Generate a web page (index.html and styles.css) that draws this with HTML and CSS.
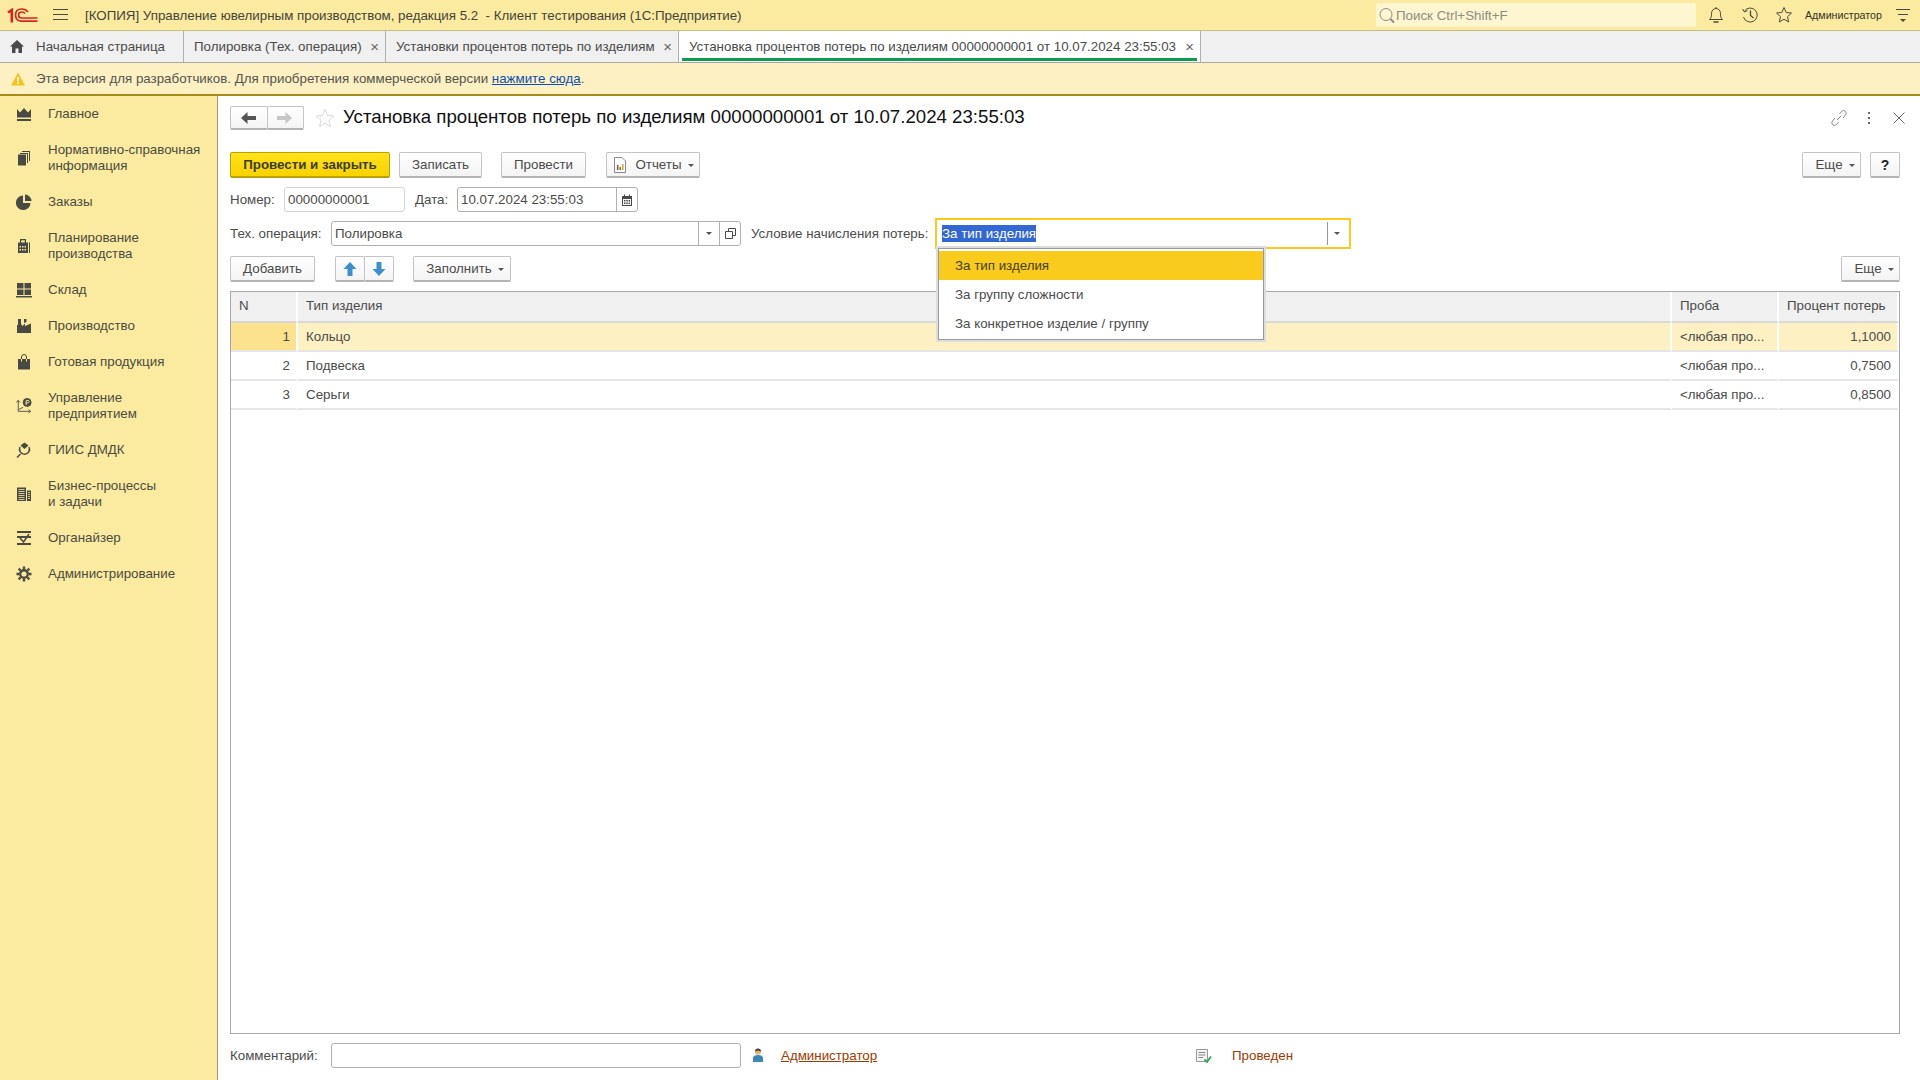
FILE: index.html

```html
<!DOCTYPE html>
<html lang="ru">
<head>
<meta charset="utf-8"/>
<title>Управление ювелирным производством</title>
<link rel="stylesheet" href="styles.css">
</head>
<body>
<div class="app">

  <div class="topbar">
    <svg class="logo" width="31" height="15" viewBox="0 0 31 15" fill="none" stroke="#d9261c">
      <path d="M1 4.500 L4.800 2 V14.500" stroke-width="2.600"/>
      <path d="M21 4 C19.500 1.800 17 1 14.500 1 C10.500 1 8.500 3.500 8.500 7 C8.500 10.500 10.500 13.200 14.500 13.200 H30.500" stroke-width="1.700"/>
      <path d="M18 5.700 C17.500 4.700 16 4 14.500 4 C12.500 4 11.500 5.500 11.500 7 C11.500 8.500 12.500 10 14.500 10 H30.500" stroke-width="1.700"/>
    </svg>
    <svg class="burger" width="16" height="12" viewBox="0 0 16 12" stroke="#4a4a40"><path d="M0 .5H15M0 5.500H15M0 10.500H15"/></svg>
    <div class="app-title">[КОПИЯ] Управление ювелирным производством, редакция 5.2&nbsp; - Клиент тестирования (1С:Предприятие)</div>
    <div class="search">
      <svg width="18" height="18" viewBox="0 0 18 18" fill="none" stroke="#8d8d80"><circle cx="8" cy="8.500" r="6"/><path d="M12.500 13 L16 16.500" stroke-width="2"/></svg>
      <span>Поиск Ctrl+Shift+F</span>
    </div>
    <svg class="top-ic ic-bell" width="16" height="18" viewBox="0 0 16 18" fill="none" stroke="#4a4a40"><path d="M1.500 13.500 C3.500 12 3.500 9.500 3.500 7.500 C3.500 4.500 5.500 2.500 8 2.500 C10.500 2.500 12.500 4.500 12.500 7.500 C12.500 9.500 12.500 12 14.500 13.500 Z"/><path d="M8 1V2.500"/><path d="M5.500 16H10.500" stroke-width="1.500"/></svg>
    <svg class="top-ic ic-hist" width="18" height="18" viewBox="0 0 18 18" fill="none" stroke="#4a4a40"><path d="M3.500 5 A7 7 0 1 1 2.500 11"/><path d="M1.500 3 L3.500 6 L6.500 4.500"/><path d="M9.500 4.500V9.500L12.500 12" stroke-width="1.300"/></svg>
    <svg class="top-ic ic-star" width="18" height="18" viewBox="0 0 18 18" fill="none" stroke="#4a4a40"><path d="M9 1.500 L11.200 6.500 L16.500 7 L12.500 10.700 L13.700 16 L9 13.200 L4.300 16 L5.500 10.700 L1.500 7 L6.800 6.500 Z"/></svg>
    <div class="user">Администратор</div>
    <svg class="top-ic ic-menu" width="16" height="16" viewBox="0 0 16 16" stroke="#4a4a40"><path d="M1 2.500H15M3 7.500H13" fill="none"/><path d="M5 12 H11 L8 15 Z" fill="#4a4a40" stroke="none"/></svg>
  </div>

  <div class="tabs">
    <div class="tab tab-home">
      <svg width="14" height="13" viewBox="0 0 14 13" fill="#4a4a4a"><path d="M7 0 L14 6.500 H12 V13 H8.500 V8.500 H5.500 V13 H2 V6.500 H0 Z"/></svg>
      <span>Начальная страница</span>
    </div>
    <div class="tab tab-2"><span>Полировка (Тех. операция)</span><i class="tab-x">×</i></div>
    <div class="tab tab-3"><span>Установки процентов потерь по изделиям</span><i class="tab-x">×</i></div>
    <div class="tab tab-4 active"><span>Установка процентов потерь по изделиям 00000000001 от 10.07.2024 23:55:03</span><i class="tab-x">×</i></div>
  </div>

  <div class="notice">
    <svg width="14" height="14" viewBox="0 0 14 14"><path d="M7 0.500 L14 13.500 H0 Z" fill="#f6c21c"/><path d="M7 5V9.500M7 10.500V12" stroke="#fff" stroke-width="1.600"/></svg>
    <span>Эта версия для разработчиков. Для приобретения коммерческой версии <a href="#">нажмите сюда</a>.</span>
  </div>

  <div class="workspace">
    <nav class="sidebar">
      <div class="nav-item">
        <svg width="16" height="16" viewBox="0 0 16 16" fill="#4a4a44"><path d="M1 3 L4 6.500 L8 2 L12 6.500 L15 3 V11.500 H1 Z"/><path d="M1 13H15V15H1Z"/></svg>
        <span>Главное</span>
      </div>
      <div class="nav-item">
        <svg width="16" height="16" viewBox="0 0 16 16" fill="#4a4a44"><path d="M2 4.500H10V15.500H2Z"/><path d="M4 3 H12 V13 H11 V4 H4Z"/><path d="M6 1 H14 V11 H13 V2 H6Z"/></svg>
        <span>Нормативно-справочная<br>информация</span>
      </div>
      <div class="nav-item">
        <svg width="16" height="16" viewBox="0 0 16 16" fill="#4a4a44"><path d="M7 1.500 V9 H14.500 A7.300 7.300 0 1 1 7 1.500Z"/><path d="M9 0.500 A7 7 0 0 1 15.500 7 H9Z"/></svg>
        <span>Заказы</span>
      </div>
      <div class="nav-item">
        <svg width="16" height="16" viewBox="0 0 16 16" fill="#4a4a44"><path d="M4 1H10V4.500H12V15H2V4.500H4ZM5.200 2.200V4.500H8.800V2.200Z" fill-rule="evenodd"/><path d="M13 4.500H14V15H13Z"/><path d="M3.500 8H5V9.500H3.500ZM6 8H7.500V9.500H6ZM8.500 8H10V9.500H8.500ZM3.500 11H5V12.500H3.500ZM6 11H7.500V12.500H6ZM8.500 11H10V12.500H8.500Z" fill="#fbeba0"/></svg>
        <span>Планирование<br>производства</span>
      </div>
      <div class="nav-item">
        <svg width="16" height="16" viewBox="0 0 16 16" fill="#4a4a44"><path d="M1 1H7.500V6.500H1ZM8.500 1H15V6.500H8.500ZM1 7.500H7.500V13H1ZM8.500 7.500H15V13H8.500ZM0 14H16V15.500H0Z"/></svg>
        <span>Склад</span>
      </div>
      <div class="nav-item">
        <svg width="16" height="16" viewBox="0 0 16 16" fill="#4a4a44"><path d="M2 1H5V6L6.500 8L9 5.500V8L15 5.500V15H1V7H2Z"/><path d="M8 1H10.500V4L8 5Z"/></svg>
        <span>Производство</span>
      </div>
      <div class="nav-item">
        <svg width="16" height="16" viewBox="0 0 16 16" fill="#4a4a44"><path d="M2 5H14V15.500H2Z"/><path d="M5.500 7.500V3A2.500 2.500 0 0 1 10.500 3V7.500" fill="none" stroke="#4a4a44"/><path d="M5.500 5V7.500M10.500 5V7.500" stroke="#fbeba0"/></svg>
        <span>Готовая продукция</span>
      </div>
      <div class="nav-item">
        <svg width="18" height="18" viewBox="0 0 18 18" fill="none" stroke="#4a4a44"><path d="M2.500 3V15M0.500 5L2.500 2.500L4.500 5M2.500 15H16M14 13L16.500 15L14 17"/><path d="M3 13L8 10.500"/><circle cx="12.500" cy="5" r="4.500" fill="#4a4a44"/><path d="M11.500 8V2.800H13.500A1.300 1.300 0 0 1 13.500 5.400H10.500" stroke="#fbeba0"/></svg>
        <span>Управление<br>предприятием</span>
      </div>
      <div class="nav-item">
        <svg width="16" height="16" viewBox="0 0 16 16" fill="none" stroke="#4a4a44" stroke-width="1.500"><path d="M4.500 3.500 L8.500 0.500 L12.500 3.500 L8.500 7Z" fill="#4a4a44" stroke="none"/><path d="M4 5A5 5 0 1 0 13 5"/><path d="M4.500 12L1 15.500"/></svg>
        <span>ГИИС ДМДК</span>
      </div>
      <div class="nav-item">
        <svg width="16" height="16" viewBox="0 0 16 16" fill="#4a4a44"><path d="M1 1.500H10V15H1ZM11 4.500H15V15H11Z"/><path d="M2.500 3.500H8.500M2.500 5.500H8.500M2.500 7.500H8.500M2.500 9.500H8.500M2.500 11.500H8.500M2.500 13.500H8.500M12 6.500H14M12 8.500H14M12 10.500H14M12 12.500H14" stroke="#fbeba0" stroke-width=".8"/></svg>
        <span>Бизнес-процессы<br>и задачи</span>
      </div>
      <div class="nav-item">
        <svg width="16" height="16" viewBox="0 0 16 16" fill="none" stroke="#4a4a44" stroke-width="2"><path d="M1 2H15M1 14H15M1 7H15"/><path d="M4 8L7.500 12L13 4" stroke-width="1.500"/></svg>
        <span>Органайзер</span>
      </div>
      <div class="nav-item">
        <svg width="16" height="16" viewBox="0 0 16 16" fill="none" stroke="#4a4a44"><circle cx="8" cy="8" r="3.800" stroke-width="2.400"/><path d="M8 .5V3M8 13V15.500M.5 8H3M13 8H15.500M2.700 2.700L4.500 4.500M11.500 11.500L13.300 13.300M2.700 13.300L4.500 11.500M11.500 4.500L13.300 2.700" stroke-width="2.400"/></svg>
        <span>Администрирование</span>
      </div>
    </nav>

    <main class="content">
      <div class="page-head">
        <div class="btn-group nav-group">
          <div class="btn nav-btn"><svg width="16" height="12" viewBox="0 0 16 12" fill="#555"><path d="M0 6L6.500 0V4H15V8H6.500V12Z"/></svg></div>
          <div class="btn nav-btn"><svg width="16" height="12" viewBox="0 0 16 12" fill="#c6c6c6"><path d="M15 6L8.500 0V4H0V8H8.500V12Z"/></svg></div>
        </div>
        <svg class="fav" width="20" height="20" viewBox="0 0 20 20" fill="none" stroke="#d8d8d8"><path d="M10 1.500 L12.500 7.500 L18.700 8 L14 12.200 L15.400 18.500 L10 15.200 L4.600 18.500 L6 12.200 L1.300 8 L7.500 7.500 Z"/></svg>
        <h1>Установка процентов потерь по изделиям 00000000001 от 10.07.2024 23:55:03</h1>
        <div class="head-tools">
          <svg width="16" height="18" viewBox="0 0 16 18" fill="none" stroke="#8a8a8a"><path d="M6 11 L10.500 6.500"/><path d="M8.500 5 L10.500 2.500 A2.600 2.600 0 0 1 14.500 6 L12 9"/><path d="M7.500 13 L5.500 15.500 A2.600 2.600 0 0 1 1.500 12 L4 9"/></svg>
          <svg width="4" height="14" viewBox="0 0 4 14" fill="#6a6a6a"><path d="M1 1H3V3H1ZM1 6H3V8H1ZM1 11H3V13H1Z"/></svg>
          <svg width="12" height="12" viewBox="0 0 12 12" stroke="#6a6a6a" fill="none"><path d="M.5 .5L11.500 11.500M11.500 .5L.5 11.500"/></svg>
        </div>
      </div>

      <div class="form-row row-cmd">
        <div class="btn btn-primary">Провести и закрыть</div>
        <div class="btn btn-save">Записать</div>
        <div class="btn btn-post">Провести</div>
        <div class="btn btn-report">
          <svg width="14" height="16" viewBox="0 0 14 16" fill="none"><path d="M1.500 .5H9L12.500 4V15.500H1.500Z" stroke="#888" fill="#fff"/><path d="M4 8H5.500V13H4Z" fill="#d9362b"/><path d="M6.500 10H8V13H6.500Z" fill="#2f9e44"/><path d="M9 7H10.500V13H9Z" fill="#e0a020"/></svg>
          <span>Отчеты</span><i class="caret"></i>
        </div>
        <div class="spacer"></div>
        <div class="btn btn-more">Еще<i class="caret"></i></div>
        <div class="btn btn-help">?</div>
      </div>

      <div class="form-row row-num">
        <label class="lbl-num">Номер:</label>
        <div class="field field-num">00000000001</div>
        <label class="lbl-date">Дата:</label>
        <div class="field field-date">
          <span class="val">10.07.2024 23:55:03</span>
          <span class="field-btn btn-cal"><svg width="12" height="12" viewBox="0 0 12 12" fill="#4a4a4a"><path d="M1 2H3V.5H4V2H8V.5H9V2H11V12H1ZM2 5V11H10V5Z" fill-rule="evenodd"/><path d="M3 6H4.500V7.500H3ZM5.300 6H6.800V7.500H5.300ZM7.600 6H9.100V7.500H7.600ZM3 8.500H4.500V10H3ZM5.300 8.500H6.800V10H5.300ZM7.600 8.500H9.100V10H7.600Z"/></svg></span>
        </div>
      </div>

      <div class="form-row row-op">
        <label class="lbl-op">Тех. операция:</label>
        <div class="field field-op">
          <span class="val">Полировка</span>
          <span class="field-btn"><i class="caret"></i></span>
          <span class="field-btn"><svg width="11" height="11" viewBox="0 0 11 11" fill="none" stroke="#4a4a4a"><path d="M3.500 3.500V.5H10.500V7.500H7.500"/><path d="M.5 3.500H7.500V10.500H.5Z"/></svg></span>
        </div>
        <label class="lbl-cond">Условие начисления потерь:</label>
        <div class="field-active">
          <span class="val"><span class="selected">За тип изделия</span></span>
          <span class="active-btn"><i class="caret"></i></span>
          <div class="dropdown">
            <div class="dd-item current">За тип изделия</div>
            <div class="dd-item">За группу сложности</div>
            <div class="dd-item">За конкретное изделие / группу</div>
          </div>
        </div>
      </div>

      <div class="form-row row-table-cmd">
        <div class="btn btn-add">Добавить</div>
        <div class="btn-group arrows">
          <div class="btn arrow-btn"><svg width="14" height="14" viewBox="0 0 14 14" fill="#3e8fd0"><path d="M7 0L13.500 7H9.500V14H4.500V7H.5Z"/></svg></div>
          <div class="btn arrow-btn"><svg width="14" height="14" viewBox="0 0 14 14" fill="#3e8fd0"><path d="M7 14L13.500 7H9.500V0H4.500V7H.5Z"/></svg></div>
        </div>
        <div class="btn btn-fill">Заполнить<i class="caret"></i></div>
        <div class="spacer"></div>
        <div class="btn btn-more2">Еще<i class="caret"></i></div>
      </div>

      <div class="grid-wrap">
        <table class="grid">
          <colgroup><col class="c-n"><col><col class="c-probe"><col class="c-pct"></colgroup>
          <thead>
            <tr><th>N</th><th>Тип изделия</th><th>Проба</th><th>Процент потерь</th></tr>
          </thead>
          <tbody>
            <tr class="cur"><td class="num">1</td><td>Кольцо</td><td>&lt;любая про...</td><td class="num">1,1000</td></tr>
            <tr><td class="num">2</td><td>Подвеска</td><td>&lt;любая про...</td><td class="num">0,7500</td></tr>
            <tr><td class="num">3</td><td>Серьги</td><td>&lt;любая про...</td><td class="num">0,8500</td></tr>
          </tbody>
        </table>
      </div>

      <div class="form-row row-foot">
        <label class="lbl-comment">Комментарий:</label>
        <div class="field field-comment"></div>
        <svg class="ic-user" width="12" height="15" viewBox="0 0 12 15"><circle cx="6" cy="3.800" r="3" fill="#e8b070"/><path d="M3 3.500A3 3 0 0 1 9 3.500C7.500 2.500 4.500 2.500 3 3.500Z" fill="#444"/><path d="M1 14V10C1 8 3 7 6 7S11 8 11 10V14Z" fill="#3a86b8"/></svg>
        <a class="author" href="#">Администратор</a>
        <svg class="ic-doc" width="16" height="14" viewBox="0 0 16 14" fill="none"><path d="M.5 .5H11.500V12.500H.5Z" stroke="#9a9a9a" fill="#f4f4f4"/><path d="M2.500 3.500H9.500M2.500 6H9.500M2.500 8.500H7" stroke="#888"/><path d="M8.500 10.500L11 13L15 7.500" stroke="#2fa84f" stroke-width="1.800"/></svg>
        <span class="status">Проведен</span>
      </div>
    </main>
  </div>
</div>
</body>
</html>
```

FILE: styles.css

```css
* { box-sizing: border-box; }
html, body { margin: 0; height: 100%; overflow: hidden; }
body { font-family: "Liberation Sans", Arial, sans-serif; font-size: 13.33px; color: #4b4b4b; background: #fff; }
a { color: #0f4fb4; }
i { font-style: normal; }
.app { display: flex; flex-direction: column; height: 100vh; }

/* top bar */
.topbar { display: flex; align-items: center; height: 31px; flex: none; background: #fbeba0; border-bottom: 1px solid #c9bd86; }
.logo { margin-left: 7px; }
.burger { margin-left: 15px; }
.app-title { margin-left: 16px; color: #44443c; white-space: nowrap; }
.search { display: flex; align-items: center; margin-left: auto; width: 320px; height: 24px; background: #fdf6d0; border-radius: 2px; padding-left: 2px; color: #8d8d80; }
.ic-bell { margin-left: 12px; }
.ic-hist { margin-left: 17px; }
.ic-star { margin-left: 16px; }
.user { margin-left: 12px; font-size: 10.67px; color: #33332c; width: 87px; white-space: nowrap; }
.ic-menu { margin-left: 3px; margin-right: 9px; }

/* tabs */
.tabs { display: flex; height: 32px; flex: none; background: #f0f0f0; border-bottom: 1px solid #a8a8a8; }
.tab { display: flex; align-items: center; border-right: 1px solid #b0b0b0; color: #4b4b4b; white-space: nowrap; position: relative; }
.tab-home { width: 184px; padding-left: 10px; }
.tab-home span { margin-left: 12px; }
.tab-2 { width: 202px; padding-left: 10px; }
.tab-3 { width: 293px; padding-left: 10px; }
.tab-4 { width: 522px; padding-left: 10px; }
.tab-x { margin-left: auto; margin-right: 6px; font-size: 15px; color: #666; }
.tab.active { background: #fff; }
.tab.active::after { content: ""; position: absolute; left: 3px; right: 3px; bottom: 1px; height: 3px; background: #0e9a50; }

/* notice */
.notice { display: flex; align-items: center; height: 33px; flex: none; padding-left: 11px; background: #fdf1c4; border-bottom: 2px solid #a58d1c; color: #55554c; }
.notice span { margin-left: 11px; }

/* layout */
.workspace { flex: 1; display: flex; min-height: 0; }
.sidebar { width: 218px; flex: none; background: #fbeba0; border-right: 1px solid #a89c68; }
.nav-item { display: flex; align-items: center; padding: 10px 0 10px 16px; color: #4b4b42; line-height: 16px; }
.nav-item svg { width: 16px; flex: none; }
.nav-item span { margin-left: 16px; white-space: nowrap; }
.content { flex: 1; display: flex; flex-direction: column; min-width: 0; padding: 10px 20px 0 12px; }

/* header */
.page-head { display: flex; align-items: center; height: 24px; flex: none; }
.fav { margin-left: 11px; }
h1 { margin: 0 0 2px 8px; font-size: 18.67px; font-weight: normal; color: #111; white-space: nowrap; }
.head-tools { display: flex; align-items: center; margin-left: auto; margin-right: -5px; }
.head-tools svg:nth-child(2) { margin-left: 20px; }
.head-tools svg:nth-child(3) { margin-left: 22px; }

/* buttons */
.btn { display: flex; align-items: center; justify-content: center; height: 26px; background: linear-gradient(#fff, #f4f4f4); border: 1px solid #c4c4c4; border-bottom: 2px solid #b4b4b4; border-radius: 2px; color: #4b4b4b; white-space: nowrap; }
.btn-group { display: flex; }
.btn-group .btn + .btn { margin-left: -1px; }
.nav-btn { width: 37.5px; height: 24px; }
.btn-primary { width: 160px; background: linear-gradient(#ffe21a, #f7d300); border-color: #b9a200; color: #3c3c20; font-weight: bold; }
.btn-save { width: 83px; margin-left: 9px; }
.btn-post { width: 85px; margin-left: 19px; }
.btn-report { width: 94px; margin-left: 20px; }
.btn-report span { margin-left: 8px; }
.btn-report svg { margin-left: 1px; }
.btn-more { width: 59px; padding-left: 7px; }
.btn-help { width: 30px; margin-left: 9px; font-weight: bold; font-size: 14px; color: #222; }
.btn-add { width: 85px; }
.arrows { margin-left: 20px; }
.arrow-btn { width: 30px; }
.btn-fill { width: 98px; margin-left: 19px; padding-left: 6px; }
.btn-more2 { width: 59px; padding-left: 7px; }
.caret { display: inline-block; width: 0; height: 0; margin-left: 6px; margin-top: 2px; border: 3px solid transparent; border-top-color: #555; border-bottom: 0; }
.spacer { flex: 1; }

/* form rows */
.form-row { display: flex; align-items: center; flex: none; }
.row-cmd { margin-top: 22px; }
.row-num { margin-top: 9px; height: 25px; }
.row-op { margin-top: 9px; height: 25px; }
.row-table-cmd { margin-top: 10px; }
.lbl-num { width: 54px; }
.lbl-date { margin-left: 10px; width: 42px; }
.lbl-op { width: 101px; }
.lbl-cond { margin-left: 10px; width: 184px; white-space: nowrap; }
.field { display: flex; align-items: center; height: 25px; border: 1px solid #b0b0b0; border-radius: 3px; background: #fff; color: #4b4b4b; padding-left: 3px; }
.field .val { flex: 1; }
.field-num { width: 121px; border-color: #d4d4d4; }
.field-date { width: 181px; }
.field-op { width: 410px; }
.field-btn { display: flex; align-items: center; justify-content: center; width: 21px; height: 100%; border-left: 1px solid #b0b0b0; }
.field-btn .caret { margin: 0; }

/* focused select */
.field-active { position: relative; display: flex; align-items: center; width: 416px; height: 31px; border: 2px solid #f9cb1d; padding-left: 5px; color: #333; }
.field-active .val { flex: 1; }
.selected { background: #3367d1; color: #fff; padding: 1px 0; }
.active-btn { display: flex; align-items: center; justify-content: center; width: 22px; height: 23px; padding-right: 3px; border-left: 1px solid #999; }
.active-btn .caret { margin: 0; }
.dropdown { position: absolute; left: 1px; top: 28px; width: 326px; padding: 2px 0 1px; background: #fff; border: 1px solid #9a9a9a; box-shadow: 0 0 0 2px #ddd; z-index: 5; }
.dd-item { display: flex; align-items: center; height: 29px; padding-left: 16px; color: #4b4b4b; }
.dd-item.current { background: #f9cb1d; color: #44401c; }

/* grid */
.grid-wrap { flex: 1; min-height: 0; margin-top: 9px; border: 1px solid #a8a8a8; }
.grid { width: 100%; border-collapse: separate; border-spacing: 0; table-layout: fixed; }
.c-n { width: 67px; }
.c-probe { width: 107px; }
.c-pct { width: 120px; }
.grid th { height: 31px; padding: 0 8px 2px; text-align: left; font-weight: normal; background: #f0f0f0; color: #4b4b4b; border-right: 2px solid #fff; border-bottom: 2px solid #d8d8d8; }
.grid td { height: 29px; padding: 0 8px; color: #4b4b4b; border-right: 2px solid #fff; border-bottom: 2px solid #e6e6e6; white-space: nowrap; overflow: hidden; }
.grid td.num { text-align: right; padding-right: 6px; }
.grid tr.cur td { background: #fdf1c4; }
.grid tr.cur td:first-child { background: #fce28c; }

/* footer */
.row-foot { height: 46px; padding-bottom: 3px; }
.lbl-comment { width: 101px; }
.field-comment { width: 410px; }
.ic-user { margin-left: 11px; }
.author { margin-left: 17px; color: #a03b00; width: 415px; }
.status { margin-left: 20px; color: #a03b00; }
```
